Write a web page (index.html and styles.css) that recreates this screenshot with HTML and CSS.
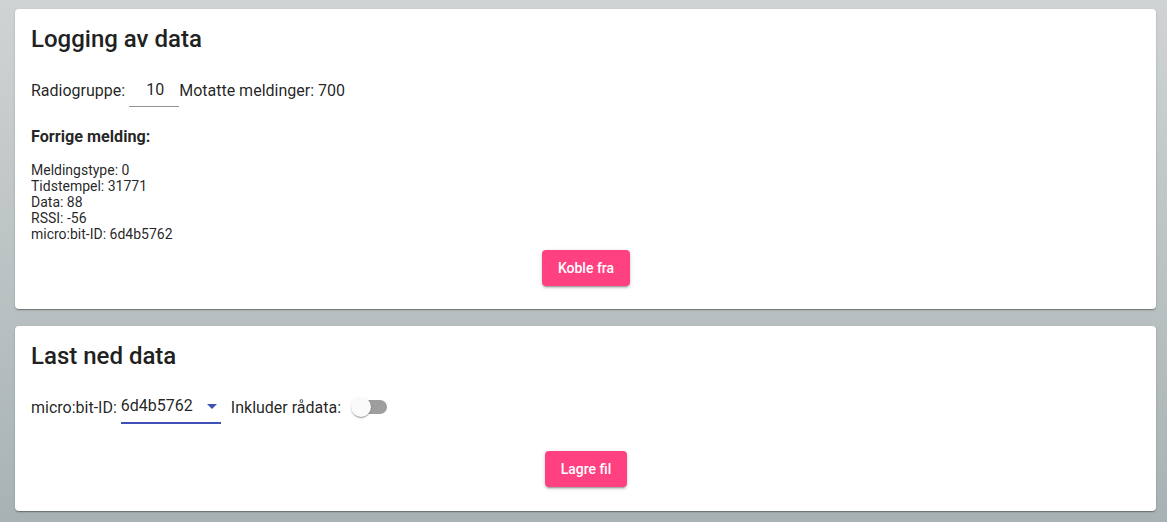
FILE: index.html
```html
<!DOCTYPE html>
<html lang="no">
<head>
<meta charset="utf-8">
<title>Logging</title>
<link rel="stylesheet" href="styles.css">
</head>
<body>
<div class="page">
  <section class="card card-log">
    <h2 class="title">Logging av data</h2>
    <div class="row">
      <span>Radiogruppe:</span>
      <span class="num-input">10</span>
      <span>Motatte meldinger: 700</span>
    </div>
    <h3 class="sub">Forrige melding:</h3>
    <div class="msg">
      <div>Meldingstype: 0</div>
      <div>Tidstempel: 31771</div>
      <div>Data: 88</div>
      <div>RSSI: -56</div>
      <div>micro:bit-ID: 6d4b5762</div>
    </div>
    <div class="actions actions-log">
      <button class="btn">Koble fra</button>
    </div>
  </section>
  <section class="card card-dl">
    <h2 class="title">Last ned data</h2>
    <div class="row row-dl">
      <span>micro:bit-ID:</span>
      <span class="select"><span class="select-val">6d4b5762</span><span class="arrow"></span></span>
      <span>Inkluder rådata:</span>
      <span class="toggle"><span class="track"></span><span class="thumb"></span></span>
    </div>
    <div class="actions actions-dl">
      <button class="btn">Lagre fil</button>
    </div>
  </section>
</div>
</body>
</html>
```
FILE: styles.css
```css
html, body {
  margin: 0;
  height: 100%;
}
body {
  background: linear-gradient(180deg, #cfd3d3 0%, #bcc3c4 50%, #a8b2b4 100%);
  font-family: Roboto, "Noto Sans", sans-serif;
  color: rgba(0, 0, 0, 0.87);
  overflow: hidden;
}
.page {
  padding: 9px 11px 0 15px;
  display: flex;
  flex-direction: column;
  gap: 17px;
}
.card {
  background: #fff;
  border-radius: 4px;
  box-shadow: 0 2px 1px -1px rgba(0,0,0,.2), 0 1px 1px 0 rgba(0,0,0,.14), 0 1px 3px 0 rgba(0,0,0,.12);
  padding: 16px 16px 0 16px;
  box-sizing: border-box;
}
.card-log { height: 300px; }
.card-dl { height: 185px; }
.title {
  margin: 0;
  font-size: 24px;
  line-height: 28px;
  font-weight: 500;
  color: #212121;
}
.row {
  display: flex;
  align-items: center;
  font-size: 16px;
  margin-top: 19px;
  height: 36px;
}
.num-input {
  box-sizing: content-box;
  margin-left: 4px;
  padding-right: 15px;
  width: 35px;
  text-align: right;
  height: 32px;
  line-height: 32px;
  border-bottom: 1px solid #949494;
  margin-top: 1px;
}
.sub {
  margin: 19px 0 0 0;
  font-size: 16.2px;
  line-height: 20px;
  font-weight: 700;
}
.msg {
  margin-top: 15px;
  font-size: 14px;
  line-height: 16px;
}
.actions {
  display: flex;
  justify-content: center;
  padding-left: 1px;
}
.actions-log { margin-top: 8px; }
.actions-dl { margin-top: 26px; }
.btn {
  font-family: Roboto, "Noto Sans", sans-serif;
  font-size: 14px;
  font-weight: 500;
  color: #fff;
  background: #ff4081;
  border: none;
  border-radius: 4px;
  height: 36px;
  padding: 0 16px;
  box-shadow: 0 3px 1px -2px rgba(0,0,0,.2), 0 2px 2px 0 rgba(0,0,0,.14), 0 1px 5px 0 rgba(0,0,0,.12);
}
.row-dl { margin-top: 19px; }
.select {
  display: inline-flex;
  align-items: center;
  width: 100px;
  box-sizing: border-box;
  margin-left: 4px;
  height: 34px;
  border-bottom: 2px solid #3f51b5;
  margin-top: 0;
}
.select-val {
  flex: 1;
  line-height: 32px;
}
.arrow {
  width: 0;
  height: 0;
  border-left: 5px solid transparent;
  border-right: 5px solid transparent;
  border-top: 5px solid #3f51b5;
  margin-right: 4px;
}
.select + span { margin-left: 10px; }
.toggle {
  position: relative;
  width: 36px;
  height: 20px;
  margin-left: 10px;
}
.track {
  position: absolute;
  left: 2px;
  top: 3px;
  width: 34px;
  height: 14px;
  border-radius: 7px;
  background: #9e9e9e;
}
.thumb {
  position: absolute;
  left: 0;
  top: 0;
  width: 20px;
  height: 20px;
  border-radius: 50%;
  background: #fafafa;
  box-shadow: 0 2px 1px -1px rgba(0,0,0,.2), 0 1px 1px 0 rgba(0,0,0,.14), 0 1px 3px 0 rgba(0,0,0,.12);
}
```
